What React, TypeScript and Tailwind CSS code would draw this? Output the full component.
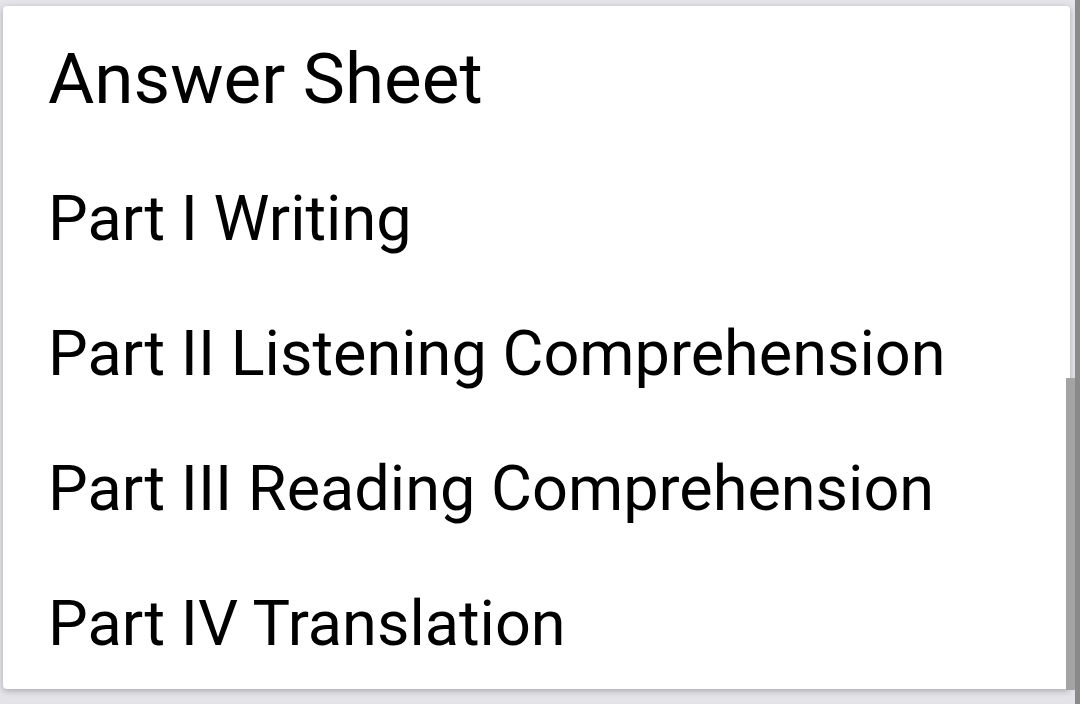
const sections = [
  'Part I Writing',
  'Part II Listening Comprehension',
  'Part III Reading Comprehension',
  'Part IV Translation',
];

export default function App() {
  return (
    <div
      className="relative w-[1080px] h-[704px] overflow-hidden bg-[#e4e4e8]"
      style={{ fontFamily: 'Roboto, "Noto Sans", sans-serif' }}
    >
      {/* popup card */}
      <div className="ml-[3px] mt-[6px] w-[1067px] h-[683px] overflow-hidden rounded-[4px] bg-white shadow-[0_2px_6px_rgba(0,0,0,0.25)] pl-[45px] pt-[37px] text-black">
        <div className="text-[71px] leading-[71px]">Answer Sheet</div>
        <div className="mt-[37px] flex flex-col">
          {sections.map((s) => (
            <div key={s} className="h-[135px] text-[63px] leading-[135px] whitespace-nowrap">
              {s}
            </div>
          ))}
        </div>
      </div>

      {/* scrollbar edge + thumb */}
      <div className="absolute right-0 top-0 h-full w-[5px] bg-[#8a8a8a]" />
      <div className="absolute left-[1066px] top-[378px] bottom-[14px] w-[9px] bg-[#a4a4a4]" />
    </div>
  );
}
